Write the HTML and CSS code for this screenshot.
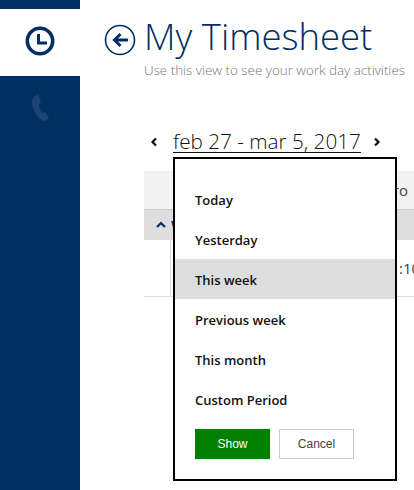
FILE: index.html
```html
<!DOCTYPE html>
<html lang="en">
<head>
  <meta charset="UTF-8" />
  <meta name="viewport" content="width=device-width, initial-scale=1.0" />
  <title>My Timesheet</title>
  <link rel="stylesheet" href="styles.css">
</head>
<body>
  <nav class="sidebar">
    <div class="tile">
      <svg width="30" height="30" viewBox="0 0 30 30">
        <circle cx="15" cy="15" r="12.7" fill="none" stroke="#002f63" stroke-width="3.6" />
        <path d="M13.5 8V17H22" fill="none" stroke="#002f63" stroke-width="3" />
      </svg>
    </div>
    <div class="tile-dim">
      <svg width="20" height="30" viewBox="0 0 20 30">
        <path d="M4.5 3L8.5 1.5L11 9.5L8.5 11.5C9 15 10.5 18 12.5 20L15.5 19L19 25L15.5 28C9 28 1 16 2 7Z" fill="#1a4475" />
      </svg>
    </div>
  </nav>

  <main class="content">
    <header class="page-head">
      <svg class="back" width="32" height="32" viewBox="0 0 32 32">
        <circle cx="16" cy="16" r="14.5" fill="none" stroke="#002f63" stroke-width="1.6" />
        <path d="M24 16H11M16.5 10L10.5 16L16.5 22" fill="none" stroke="#002f63" stroke-width="3" />
      </svg>
      <div>
        <h1>My Timesheet</h1>
        <p class="sub">Use this view to see your work day activities</p>
      </div>
    </header>

    <div class="range">
      <svg class="chev" width="8" height="10" viewBox="0 0 8 10">
        <path d="M6 1.5L2.5 5L6 8.500" fill="none" stroke="#111" stroke-width="2.200" />
      </svg>
      <span class="dates">feb 27 - mar 5, 2017</span>
      <svg class="chev" width="8" height="10" viewBox="0 0 8 10">
        <path d="M2 1.5L5.500 5L2 8.500" fill="none" stroke="#111" stroke-width="2.200" />
      </svg>
    </div>

    <div class="sheet">
      <div class="sheet-head">ro</div>
      <div class="sheet-group">
        <svg width="10" height="8" viewBox="0 0 10 8">
          <path d="M1 6L5 2L9 6" fill="none" stroke="#002f63" stroke-width="2.200" />
        </svg>
        <span>W</span>
      </div>
      <div class="sheet-row">
        <div class="row-mark"></div>
        <span class="cell">:10</span>
      </div>
    </div>
  </main>

  <div class="menu">
    <ul class="periods">
      <li>Today</li>
      <li>Yesterday</li>
      <li class="selected">This week</li>
      <li>Previous week</li>
      <li>This month</li>
      <li>Custom Period</li>
    </ul>
    <div class="menu-actions">
      <button class="btn btn-show">Show</button>
      <button class="btn btn-cancel">Cancel</button>
    </div>
  </div>
</body>
</html>
```

FILE: styles.css
```css
html, body {
  height: 100%;
}
body {
  margin: 0;
  display: flex;
  overflow: hidden;
  font-family: "Open Sans", "Noto Sans", sans-serif;
  background-color: #fff;
  color: #111;
}
.sidebar {
  flex: 0 0 80px;
  background-color: #002f63;
  padding-top: 9px;
}
.tile {
  height: 63px;
  padding-bottom: 4px;
  background-color: #fff;
  display: flex;
  align-items: center;
  justify-content: center;
}
.tile-dim {
  display: flex;
  justify-content: center;
  padding-top: 17px;
}
.content {
  flex: 1;
  min-width: 0;
}
.page-head {
  display: flex;
  padding: 12px 0 0 24px;
  gap: 8px;
}
.back {
  margin-top: 12px;
  flex: none;
}
h1 {
  margin: 0;
  font-size: 36.500px;
  font-weight: 300;
  line-height: 49px;
  color: #002f63;
}
.sub {
  margin: 0;
  font-size: 13.400px;
  font-weight: 300;
  line-height: 18px;
  color: #777;
  white-space: nowrap;
}
.range {
  display: flex;
  align-items: center;
  margin: 48px 0 0 70px;
  height: 30px;
  gap: 15px;
}
.dates {
  font-size: 20.700px;
  font-weight: 300;
  line-height: 21px;
  border-bottom: 1px solid #111;
  white-space: nowrap;
  margin-right: -3px;
}
.chev {
  flex: none;
}
.sheet {
  margin: 14px 0 0 64px;
  font-size: 15px;
}
.sheet-head {
  height: 38px;
  background-color: #f2f2f2;
  border-bottom: 1px solid #ccc;
  line-height: 38px;
  text-align: right;
  padding-right: 6px;
  color: #444;
}
.sheet-group {
  height: 30px;
  background-color: #dedede;
  display: flex;
  align-items: center;
  gap: 5px;
  padding-left: 12px;
  color: #002f63;
  font-weight: 600;
}
.sheet-row {
  height: 56px;
  border-bottom: 1px solid #ddd;
  display: flex;
  align-items: center;
  color: #444;
  white-space: nowrap;
}
.row-mark {
  width: 27px;
  height: 100%;
  box-sizing: border-box;
  border-right: 1px solid #ddd;
  margin-right: 228px;
  flex: none;
}
.menu {
  position: absolute;
  left: 173px;
  top: 157px;
  width: 224px;
  height: 324px;
  border: 2px solid #000;
  background-color: #fff;
  box-sizing: border-box;
  padding-top: 20px;
}
.periods {
  list-style: none;
  margin: 0;
  padding: 0;
}
.periods li {
  height: 40px;
  line-height: 42px;
  padding-left: 20px;
  font-size: 13px;
  font-weight: 600;
}
.periods .selected {
  background-color: #ddd;
}
.menu-actions {
  display: flex;
  gap: 9px;
  padding: 10px 0 0 20px;
}
.btn {
  width: 75px;
  height: 30px;
  box-sizing: border-box;
  padding: 0;
  font-family: "Liberation Sans", Arial, sans-serif;
  font-size: 12px;
  border: 1px solid #ccc;
}
.btn-show {
  background-color: #008000;
  border-color: #008000;
  color: #fff;
}
.btn-cancel {
  background-color: #fff;
  color: #444;
}
```
